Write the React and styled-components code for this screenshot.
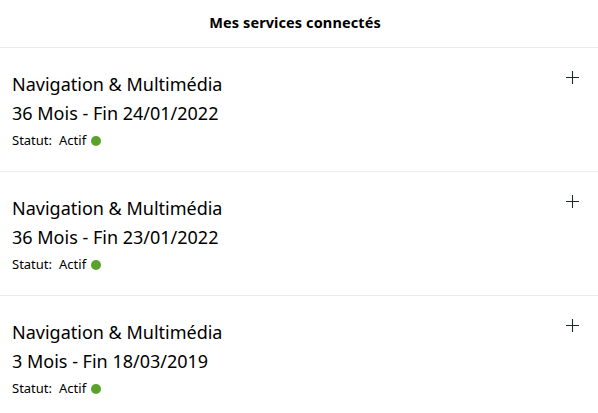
import React from "react";
import styled, { createGlobalStyle } from "styled-components";

const Global = createGlobalStyle`
  html, body { margin: 0; padding: 0; background: #fff; }
  body { font-family: "Noto Sans", "Open Sans", sans-serif; color: #000; }
`;

const Page = styled.div`
  width: 598px;
  display: flex;
  flex-direction: column;
`;

const Header = styled.h1`
  margin: 0;
  display: flex;
  align-items: center;
  justify-content: center;
  font-size: 14.5px;
  font-weight: 700;
  letter-spacing: 0.1px;
  border-bottom: 1px solid #ececec;
  padding-bottom: 4px;
  padding-right: 8px;
  box-sizing: border-box;
  height: 48px;
`;

const Service = styled.div`
  display: flex;
  justify-content: space-between;
  align-items: flex-start;
  padding: 22px 12px 0 12px;
  height: 124px;
  box-sizing: border-box;
  border-bottom: ${(p) => (p.$last ? "none" : "1px solid #ececec")};
`;

const Info = styled.div`
  display: flex;
  flex-direction: column;
`;

const Title = styled.div`
  font-size: 18px;
  line-height: 29px;
  font-weight: 400;
`;

const Status = styled.div`
  display: flex;
  align-items: center;
  gap: 7px;
  font-size: 13px;
  margin-top: 3px;
`;

const Dot = styled.span`
  display: inline-block;
  width: 10px;
  height: 10px;
  border-radius: 50%;
  background: #5aa22b;
  margin-left: -2px;
  margin-top: 2px;
`;

const PlusButton = styled.button`
  border: none;
  background: none;
  padding: 0;
  margin: 0 6px 0 0;
  width: 15px;
  height: 15px;
  cursor: pointer;
  svg { display: block; }
`;

const services = [
  { duration: "36 Mois - Fin 24/01/2022" },
  { duration: "36 Mois - Fin 23/01/2022" },
  { duration: "3 Mois - Fin 18/03/2019" },
];

export default function App() {
  return (
    <Page>
      <Global />
      <Header>Mes services connectés</Header>
      {services.map((s, i) => (
        <Service key={i} $last={i === services.length - 1}>
          <Info>
            <Title>Navigation &amp; Multimédia</Title>
            <Title>{s.duration}</Title>
            <Status>
              <span>Statut:</span>
              <span>Actif</span>
              <Dot />
            </Status>
          </Info>
          <PlusButton aria-label="Plus">
            <svg width="15" height="15" viewBox="0 0 15 15">
              <path d="M7.5 1v13M1 7.5h13" stroke="#1f2a24" strokeWidth="1.1" />
            </svg>
          </PlusButton>
        </Service>
      ))}
    </Page>
  );
}
